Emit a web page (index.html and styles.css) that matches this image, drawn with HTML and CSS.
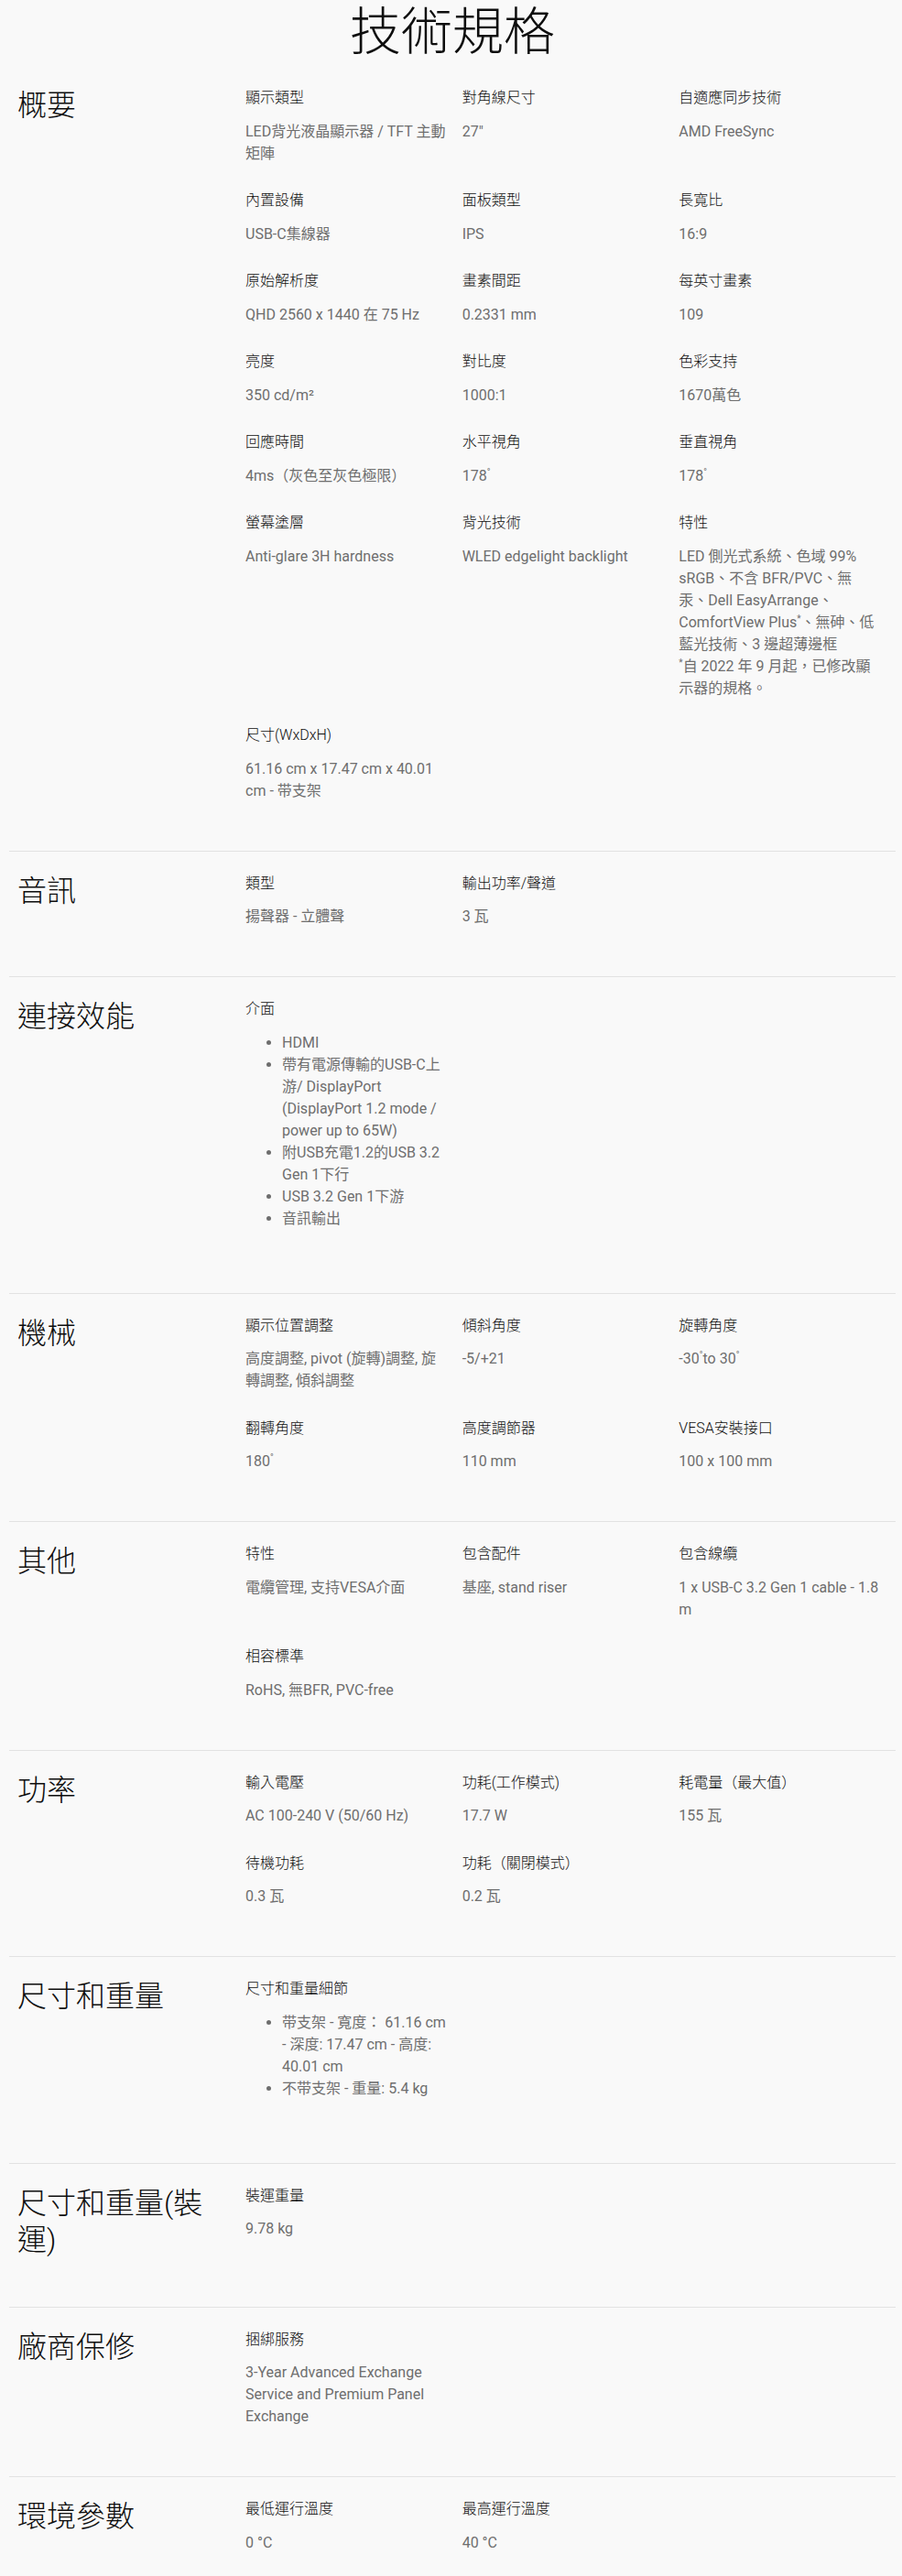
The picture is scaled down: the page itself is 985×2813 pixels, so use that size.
FILE: index.html
```html
<!DOCTYPE html>
<html lang="zh-Hant">
<head>
<meta charset="utf-8">
<title>技術規格</title>
<link rel="stylesheet" href="styles.css">
</head>
<body>
<main class="page">
  <h1 class="title">技術規格</h1>

  <section class="section">
    <h2 class="sec-head">概要</h2>
    <div class="specs">
      <div class="spec"><div class="label">顯示類型</div><div class="value">LED背光液晶顯示器 / TFT 主動矩陣</div></div>
      <div class="spec"><div class="label">對角線尺寸</div><div class="value">27"</div></div>
      <div class="spec"><div class="label">自適應同步技術</div><div class="value">AMD FreeSync</div></div>

      <div class="spec"><div class="label">內置設備</div><div class="value">USB-C集線器</div></div>
      <div class="spec"><div class="label">面板類型</div><div class="value">IPS</div></div>
      <div class="spec"><div class="label">長寬比</div><div class="value">16:9</div></div>

      <div class="spec"><div class="label">原始解析度</div><div class="value">QHD 2560 x 1440 在 75 Hz</div></div>
      <div class="spec"><div class="label">畫素間距</div><div class="value">0.2331 mm</div></div>
      <div class="spec"><div class="label">每英寸畫素</div><div class="value">109</div></div>

      <div class="spec"><div class="label">亮度</div><div class="value">350 cd/m²</div></div>
      <div class="spec"><div class="label">對比度</div><div class="value">1000:1</div></div>
      <div class="spec"><div class="label">色彩支持</div><div class="value">1670萬色</div></div>

      <div class="spec"><div class="label">回應時間</div><div class="value">4ms（灰色至灰色極限）</div></div>
      <div class="spec"><div class="label">水平視角</div><div class="value">178<sup>°</sup></div></div>
      <div class="spec"><div class="label">垂直視角</div><div class="value">178<sup>°</sup></div></div>

      <div class="spec"><div class="label">螢幕塗層</div><div class="value">Anti-glare 3H hardness</div></div>
      <div class="spec"><div class="label">背光技術</div><div class="value">WLED edgelight backlight</div></div>
      <div class="spec"><div class="label">特性</div><div class="value">LED 側光式系統、色域 99% sRGB、不含 BFR/PVC、無汞、Dell EasyArrange、ComfortView Plus<sup>*</sup>、無砷、低藍光技術、3 邊超薄邊框<br><sup>*</sup>自 2022 年 9 月起，已修改顯示器的規格。</div></div>

      <div class="spec"><div class="label">尺寸(WxDxH)</div><div class="value">61.16 cm x 17.47 cm x 40.01 cm - 带支架</div></div>
    </div>
  </section>

  <section class="section">
    <h2 class="sec-head">音訊</h2>
    <div class="specs">
      <div class="spec"><div class="label">類型</div><div class="value">揚聲器 - 立體聲</div></div>
      <div class="spec"><div class="label">輸出功率/聲道</div><div class="value">3 瓦</div></div>
    </div>
  </section>

  <section class="section">
    <h2 class="sec-head">連接效能</h2>
    <div class="specs">
      <div class="spec">
        <div class="label">介面</div>
        <ul class="value list">
          <li>HDMI</li>
          <li>帶有電源傳輸的USB-C上游/ DisplayPort (DisplayPort 1.2 mode / power up to 65W)</li>
          <li>附USB充電1.2的USB 3.2 Gen 1下行</li>
          <li>USB 3.2 Gen 1下游</li>
          <li>音訊輸出</li>
        </ul>
      </div>
    </div>
  </section>

  <section class="section">
    <h2 class="sec-head">機械</h2>
    <div class="specs">
      <div class="spec"><div class="label">顯示位置調整</div><div class="value">高度調整, pivot (旋轉)調整, 旋轉調整, 傾斜調整</div></div>
      <div class="spec"><div class="label">傾斜角度</div><div class="value">-5/+21</div></div>
      <div class="spec"><div class="label">旋轉角度</div><div class="value">-30<sup>°</sup>to 30<sup>°</sup></div></div>

      <div class="spec"><div class="label">翻轉角度</div><div class="value">180<sup>°</sup></div></div>
      <div class="spec"><div class="label">高度調節器</div><div class="value">110 mm</div></div>
      <div class="spec"><div class="label">VESA安裝接口</div><div class="value">100 x 100 mm</div></div>
    </div>
  </section>

  <section class="section">
    <h2 class="sec-head">其他</h2>
    <div class="specs">
      <div class="spec"><div class="label">特性</div><div class="value">電纜管理, 支持VESA介面</div></div>
      <div class="spec"><div class="label">包含配件</div><div class="value">基座, stand riser</div></div>
      <div class="spec"><div class="label">包含線纜</div><div class="value">1 x USB-C 3.2 Gen 1 cable - 1.8 m</div></div>

      <div class="spec"><div class="label">相容標準</div><div class="value">RoHS, 無BFR, PVC-free</div></div>
    </div>
  </section>

  <section class="section">
    <h2 class="sec-head">功率</h2>
    <div class="specs">
      <div class="spec"><div class="label">輸入電壓</div><div class="value">AC 100-240 V (50/60 Hz)</div></div>
      <div class="spec"><div class="label">功耗(工作模式)</div><div class="value">17.7 W</div></div>
      <div class="spec"><div class="label">耗電量（最大值）</div><div class="value">155 瓦</div></div>

      <div class="spec"><div class="label">待機功耗</div><div class="value">0.3 瓦</div></div>
      <div class="spec"><div class="label">功耗（關閉模式）</div><div class="value">0.2 瓦</div></div>
    </div>
  </section>

  <section class="section">
    <h2 class="sec-head">尺寸和重量</h2>
    <div class="specs">
      <div class="spec">
        <div class="label">尺寸和重量細節</div>
        <ul class="value list">
          <li>带支架 - 寬度： 61.16 cm - 深度: 17.47 cm - 高度: 40.01 cm</li>
          <li>不带支架 - 重量: 5.4 kg</li>
        </ul>
      </div>
    </div>
  </section>

  <section class="section">
    <h2 class="sec-head">尺寸和重量(裝運)</h2>
    <div class="specs">
      <div class="spec"><div class="label">裝運重量</div><div class="value">9.78 kg</div></div>
    </div>
  </section>

  <section class="section">
    <h2 class="sec-head">廠商保修</h2>
    <div class="specs">
      <div class="spec"><div class="label">捆綁服務</div><div class="value">3-Year Advanced Exchange Service and Premium Panel Exchange</div></div>
    </div>
  </section>

  <section class="section">
    <h2 class="sec-head">環境參數</h2>
    <div class="specs">
      <div class="spec"><div class="label">最低運行溫度</div><div class="value">0 °C</div></div>
      <div class="spec"><div class="label">最高運行溫度</div><div class="value">40 °C</div></div>
    </div>
  </section>
</main>
</body>
</html>
```

FILE: styles.css
```css
html, body {
  margin: 0;
  padding: 0;
  background: #f9f9f9;
}

body {
  font-family: Roboto, "Noto Sans CJK TC", "Noto Sans", sans-serif;
  color: #0e0e0e;
}

.page {
  padding: 0 7px 0 10px;
}

.title {
  margin: 0;
  height: 71px;
  line-height: 71px;
  font-size: 56px;
  font-weight: 300;
  text-align: center;
  color: #0e0e0e;
}

.section {
  display: grid;
  grid-template-columns: 249px 1fr;
  padding: 23px 0 53px 9px;
  border-top: 1px solid transparent;
}

.section + .section {
  border-top-color: #e2e2e2;
}

.sec-head {
  margin: 0;
  padding-right: 20px;
  font-size: 32px;
  line-height: 40px;
  font-weight: 300;
  color: #0e0e0e;
}

.specs {
  display: grid;
  grid-template-columns: repeat(3, 1fr);
  row-gap: 27.5px;
  align-items: start;
}

.spec {
  padding-right: 16px;
  min-width: 0;
}

.label {
  font-size: 16px;
  line-height: 24px;
  margin-bottom: 12.5px;
  font-weight: 300;
  color: #0e0e0e;
}

.value {
  font-size: 16px;
  line-height: 24px;
  color: #6e6e6e;
  text-spacing-trim: space-all;
}

.value sup {
  font-size: 10px;
  line-height: 0;
  vertical-align: super;
}

.list {
  margin: 0 0 16px;
  padding-left: 40px;
}
```
